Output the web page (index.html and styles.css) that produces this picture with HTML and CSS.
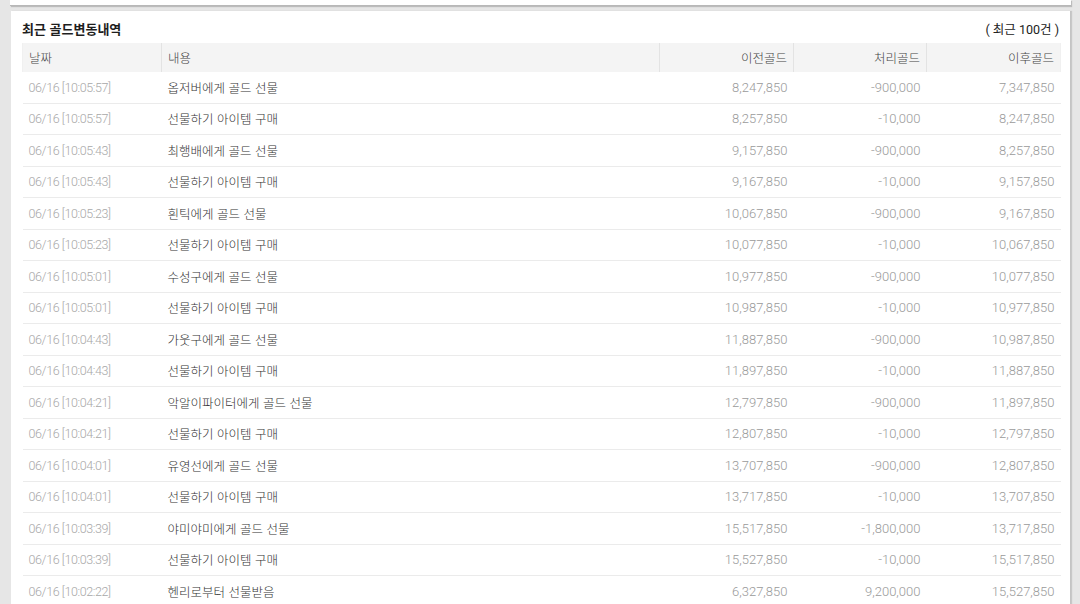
FILE: index.html
```html
<!DOCTYPE html>
<html lang="ko">
<head>
<meta charset="utf-8">
<link rel="stylesheet" href="styles.css">
</head>
<body>
<div class="top-panel"></div>
<div class="panel">
  <div class="panel-head">
    <h2 class="title">최근 골드변동내역</h2>
    <span class="count">( 최근 100건 )</span>
  </div>
  <table class="log">
    <colgroup>
      <col class="c-date"><col class="c-desc"><col class="c-num1"><col class="c-num2"><col class="c-num3">
    </colgroup>
    <thead>
      <tr><th>날짜</th><th>내용</th><th class="r">이전골드</th><th class="r">처리골드</th><th class="r">이후골드</th></tr>
    </thead>
    <tbody>
      <tr><td class="date">06/16 [10:05:57]</td><td class="desc">옵저버에게 골드 선물</td><td class="num">8,247,850</td><td class="num">-900,000</td><td class="num">7,347,850</td></tr>
      <tr><td class="date">06/16 [10:05:57]</td><td class="desc">선물하기 아이템 구매</td><td class="num">8,257,850</td><td class="num">-10,000</td><td class="num">8,247,850</td></tr>
      <tr><td class="date">06/16 [10:05:43]</td><td class="desc">최행배에게 골드 선물</td><td class="num">9,157,850</td><td class="num">-900,000</td><td class="num">8,257,850</td></tr>
      <tr><td class="date">06/16 [10:05:43]</td><td class="desc">선물하기 아이템 구매</td><td class="num">9,167,850</td><td class="num">-10,000</td><td class="num">9,157,850</td></tr>
      <tr><td class="date">06/16 [10:05:23]</td><td class="desc">흰틱에게 골드 선물</td><td class="num">10,067,850</td><td class="num">-900,000</td><td class="num">9,167,850</td></tr>
      <tr><td class="date">06/16 [10:05:23]</td><td class="desc">선물하기 아이템 구매</td><td class="num">10,077,850</td><td class="num">-10,000</td><td class="num">10,067,850</td></tr>
      <tr><td class="date">06/16 [10:05:01]</td><td class="desc">수성구에게 골드 선물</td><td class="num">10,977,850</td><td class="num">-900,000</td><td class="num">10,077,850</td></tr>
      <tr><td class="date">06/16 [10:05:01]</td><td class="desc">선물하기 아이템 구매</td><td class="num">10,987,850</td><td class="num">-10,000</td><td class="num">10,977,850</td></tr>
      <tr><td class="date">06/16 [10:04:43]</td><td class="desc">가웃구에게 골드 선물</td><td class="num">11,887,850</td><td class="num">-900,000</td><td class="num">10,987,850</td></tr>
      <tr><td class="date">06/16 [10:04:43]</td><td class="desc">선물하기 아이템 구매</td><td class="num">11,897,850</td><td class="num">-10,000</td><td class="num">11,887,850</td></tr>
      <tr><td class="date">06/16 [10:04:21]</td><td class="desc">악알이파이터에게 골드 선물</td><td class="num">12,797,850</td><td class="num">-900,000</td><td class="num">11,897,850</td></tr>
      <tr><td class="date">06/16 [10:04:21]</td><td class="desc">선물하기 아이템 구매</td><td class="num">12,807,850</td><td class="num">-10,000</td><td class="num">12,797,850</td></tr>
      <tr><td class="date">06/16 [10:04:01]</td><td class="desc">유영선에게 골드 선물</td><td class="num">13,707,850</td><td class="num">-900,000</td><td class="num">12,807,850</td></tr>
      <tr><td class="date">06/16 [10:04:01]</td><td class="desc">선물하기 아이템 구매</td><td class="num">13,717,850</td><td class="num">-10,000</td><td class="num">13,707,850</td></tr>
      <tr><td class="date">06/16 [10:03:39]</td><td class="desc">야미야미에게 골드 선물</td><td class="num">15,517,850</td><td class="num">-1,800,000</td><td class="num">13,717,850</td></tr>
      <tr><td class="date">06/16 [10:03:39]</td><td class="desc">선물하기 아이템 구매</td><td class="num">15,527,850</td><td class="num">-10,000</td><td class="num">15,517,850</td></tr>
      <tr><td class="date">06/16 [10:02:22]</td><td class="desc">헨리로부터 선물받음</td><td class="num">6,327,850</td><td class="num">9,200,000</td><td class="num">15,527,850</td></tr>
    </tbody>
  </table>
</div>
</body>
</html>
```

FILE: styles.css
```css
html, body {
  margin: 0;
  padding: 0;
  background: #e6e6e6;
  font-family: Roboto, "Noto Sans CJK KR", sans-serif;
  height: 604px;
  overflow: hidden;
}

.top-panel {
  margin: 0 9px 0 10px;
  height: 5px;
  background: #fff;
  border-bottom: 1px solid #b8b8b8;
  box-shadow: 1px 1px 1px #bcbcbc;
}

.panel {
  margin: 5px 9px 0 11px;
  background: #fff;
  padding: 3px 11px 0 11px;
  border-right: 1px solid #c4c4c4;
  box-shadow: 1px 0 1px #c8c8c8;
  height: 595px;
  overflow: hidden;
}

.panel-head {
  display: flex;
  justify-content: space-between;
  align-items: center;
  height: 29px;
}

.title {
  margin: 0;
  font-size: 13px;
  font-weight: 700;
  color: #1e1e1e;
  font-family: "Noto Sans CJK KR", sans-serif;
}

.count {
  font-size: 12.5px;
  color: #222;
  font-family: Roboto, "Noto Sans CJK KR", sans-serif;
}

.log {
  width: 1038px;
  border-collapse: collapse;
  table-layout: fixed;
}

.c-date { width: 139px; }
.c-desc { width: 498px; }
.c-num1 { width: 134px; }
.c-num2 { width: 133px; }
.c-num3 { width: 134px; }

.log th {
  height: 29px;
  padding: 0 6px;
  background: #f4f4f4;
  border-left: 1px solid #ffffff;
  border-right: 1px solid #e3e3e3;
  font-size: 12.5px;
  font-weight: 300;
  color: #444;
  text-align: left;
  font-family: "Noto Sans CJK KR", sans-serif;
}

.log th:first-child { border-left: 1px solid #f0f0f0; }
.log th:last-child { border-right: 1px solid #f0f0f0; }

.log th.r { text-align: right; }

.log td {
  height: 30.5px;
  padding: 0 6px;
  border-bottom: 1px solid #ebebeb;
  font-size: 13px;
  white-space: nowrap;
}

.log td.date {
  color: #a8a8a8;
  font-weight: 300;
  font-size: 12.5px;
  letter-spacing: -0.4px;
}

.log td.desc {
  color: #333;
  font-family: "Noto Sans CJK KR", sans-serif;
  font-weight: 300;
  font-size: 12.5px;
}

.log td.num {
  text-align: right;
  color: #9a9a9a;
  font-weight: 300;
}
```
